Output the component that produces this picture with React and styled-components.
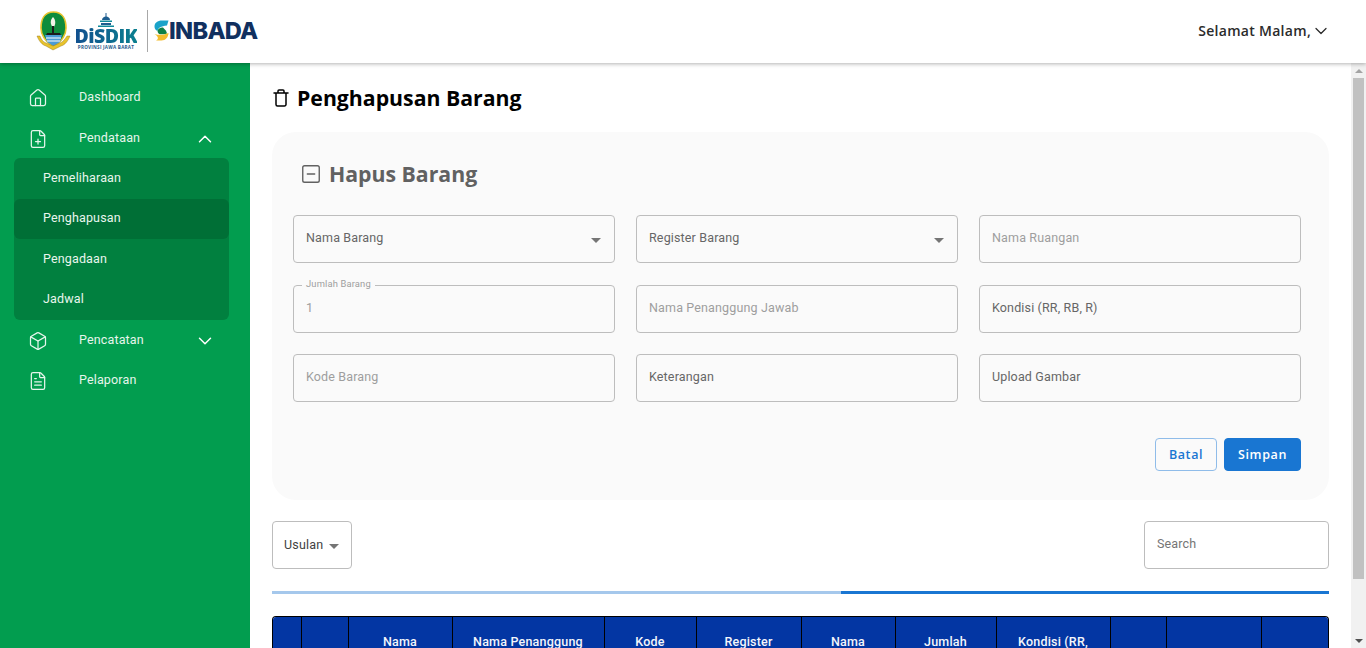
import React from "react";
import styled, { createGlobalStyle } from "styled-components";
import { House, FilePlus, Box, FileText, ChevronUp, ChevronDown, SquareMinus } from "lucide-react";

const GlobalStyle = createGlobalStyle`
  html, body {
    margin: 0;
    padding: 0;
    height: 100%;
    overflow: hidden;
    background: #fff;
  }
  * {
    box-sizing: border-box;
  }
`;

const Page = styled.div`
  height: 648px;
  display: flex;
  flex-direction: column;
  font-family: Roboto, sans-serif;
`;

const Header = styled.header`
  position: relative;
  z-index: 2;
  flex: 0 0 63px;
  display: flex;
  align-items: center;
  justify-content: space-between;
  padding: 0 35px 2px 36px;
  background: #fff;
  box-shadow: 0 1px 4px rgba(0, 0, 0, 0.3);
`;

const Logo = styled.div`
  display: flex;
  align-items: center;
  height: 61px;
`;

const DisdikBlock = styled.div`
  display: flex;
  flex-direction: column;
  align-items: center;
  width: 62px;
  margin-left: 4px;
  margin-top: 1px;
`;

const DisdikName = styled.div`
  font-family: "Open Sans", sans-serif;
  font-weight: 800;
  font-size: 19.5px;
  line-height: 17px;
  letter-spacing: -0.6px;
  background: linear-gradient(90deg, #12508f, #0b7f8f);
  -webkit-background-clip: text;
  background-clip: text;
  color: transparent;
`;

const DisdikSub = styled.div`
  font-family: "Open Sans", sans-serif;
  font-weight: 700;
  font-size: 4.6px;
  line-height: 6px;
  letter-spacing: 0.25px;
  white-space: nowrap;
  color: #24588c;
`;

const LogoDivider = styled.div`
  width: 1px;
  height: 42px;
  margin: 0 6px 0 10px;
  background: #a8a8a8;
`;

const SinbadaName = styled.div`
  font-family: Inter, sans-serif;
  font-weight: 800;
  font-size: 23.6px;
  letter-spacing: -0.7px;
  color: #11305f;
`;

const Greeting = styled.div`
  display: flex;
  align-items: center;
  font-family: "Open Sans", sans-serif;
  font-weight: 600;
  font-size: 14px;
  letter-spacing: 0.3px;
  color: #2b2b2b;
`;

const Body = styled.div`
  flex: 1;
  min-height: 0;
  display: flex;
`;

const Sidebar = styled.nav`
  flex: 0 0 250px;
  padding: 14px 21px 0 14px;
  background: #029d4f;
`;

const MenuItem = styled.div`
  display: flex;
  align-items: center;
  height: 40px;
  padding: 0 0 1px 14px;
  font-size: 12.5px;
  letter-spacing: 0.15px;
  color: #e6f5ec;

  &:first-child {
    height: 41px;
    padding-bottom: 2px;
  }

  svg {
    flex: none;
    margin-top: 2px;
  }
`;

const MenuLabel = styled.span`
  flex: 1;
  margin-left: 31px;
`;

const MenuArrow = styled.span`
  display: flex;
  margin-right: 13px;
  color: #fff;
`;

const SubMenu = styled.div`
  background: #01803f;
  border-radius: 6px;
`;

const SubItem = styled.div`
  display: flex;
  align-items: center;
  height: 40.5px;
  padding: 0 0 2px 29px;
  font-size: 12.5px;
  letter-spacing: 0.15px;
  color: #e9f6ee;
  border-radius: 6px;
  background: ${(p) => (p.$active ? "#006f36" : "transparent")};
`;

const Main = styled.main`
  flex: 1;
  min-width: 0;
  overflow: hidden;
  padding: 0 22px;
  background: #fff;
`;

const Scrollbar = styled.div`
  flex: 0 0 15px;
  display: flex;
  flex-direction: column;
  background: #f1f1f1;
`;

const ScrollArrow = styled.div`
  flex: 0 0 15px;
  display: flex;
  align-items: center;
  justify-content: center;
  margin-top: ${(p) => (p.$down ? "auto" : "0")};

  &::before {
    content: "";
    width: 0;
    height: 0;
    border-left: 4px solid transparent;
    border-right: 4px solid transparent;
    border-top: ${(p) => (p.$down ? "4px solid #505050" : "0")};
    border-bottom: ${(p) => (p.$down ? "0" : "4px solid #a3a3a3")};
  }
`;

const ScrollThumb = styled.div`
  flex: 0 0 501px;
  margin: 0 2px;
  background: #c1c1c1;
`;

const PageTitle = styled.h1`
  display: flex;
  align-items: center;
  gap: 7px;
  height: 69px;
  margin: 0;
  font-family: "Open Sans", sans-serif;
  font-weight: 700;
  font-size: 21.25px;
  color: #000;
`;

const Card = styled.section`
  height: 368px;
  padding: 0 28px 0 21px;
  background: #fafafa;
  border-radius: 24px;
`;

const CardTitle = styled.h2`
  display: flex;
  align-items: center;
  gap: 7px;
  height: 83px;
  margin: 0;
  padding-left: 7px;
  font-family: "Open Sans", sans-serif;
  font-weight: 700;
  font-size: 21.25px;
  color: #616161;
`;

const FieldGrid = styled.div`
  display: grid;
  grid-template-columns: repeat(3, 322px);
  grid-auto-rows: 48px;
  column-gap: 21px;
  row-gap: 21.5px;
`;

const Field = styled.div`
  position: relative;
  display: flex;
  align-items: center;
  justify-content: space-between;
  padding: 0 13px 3px 12px;
  border: 1px solid #bdbdbd;
  border-radius: 4px;
  font-size: 12.5px;
  letter-spacing: 0.15px;
  color: ${(p) => (p.$muted ? "#9e9e9e" : "#666")};
`;

const FloatLabel = styled.span`
  position: absolute;
  top: -8px;
  left: 8px;
  padding: 0 4px;
  background: #fafafa;
  font-size: 9.4px;
  line-height: 11px;
  color: #9e9e9e;
`;

const Caret = styled.span`
  flex: none;
  width: 0;
  height: 0;
  margin-top: 5px;
  border-left: 5px solid transparent;
  border-right: 5px solid transparent;
  border-top: 5px solid #757575;
`;

const CardActions = styled.div`
  display: flex;
  justify-content: flex-end;
  gap: 7px;
  margin-top: 36px;
`;

const Button = styled.button`
  height: 33px;
  padding: 0;
  width: ${(p) => (p.$primary ? "77px" : "62px")};
  border: 1px solid ${(p) => (p.$primary ? "#1976d2" : "#8fbce9")};
  border-radius: 4px;
  background: ${(p) => (p.$primary ? "#1976d2" : "transparent")};
  color: ${(p) => (p.$primary ? "#fff" : "#1976d2")};
  font-family: "Open Sans", sans-serif;
  font-weight: 600;
  font-size: 12.5px;
  letter-spacing: 0.6px;
`;

const Toolbar = styled.div`
  display: flex;
  justify-content: space-between;
  margin-top: 21px;
`;

const StatusSelect = styled.div`
  display: flex;
  align-items: center;
  gap: 6px;
  width: 80px;
  height: 48px;
  padding: 0 0 2px 11px;
  border: 1px solid #bdbdbd;
  border-radius: 4px;
  font-size: 12.5px;
  letter-spacing: 0.2px;
  color: #424242;
`;

const SearchBox = styled.div`
  display: flex;
  align-items: center;
  width: 185px;
  height: 48px;
  padding: 0 0 3px 12px;
  border: 1px solid #bdbdbd;
  border-radius: 4px;
  font-size: 12.5px;
  letter-spacing: 0.15px;
  color: #757575;
`;

const TabBar = styled.div`
  display: flex;
  height: 3px;
  margin-top: 22px;
`;

const Tab = styled.div`
  flex: ${(p) => (p.$active ? "0 0 488px" : "1")};
  background: ${(p) => (p.$active ? "#1976d2" : "#a5c8ec")};
`;

const TableWrap = styled.div`
  margin-top: 22px;
  border: 1px solid #000;
  border-bottom: 0;
  border-radius: 4px 4px 0 0;
  overflow: hidden;
`;

const Table = styled.table`
  width: 100%;
  table-layout: fixed;
  border-collapse: collapse;
`;

const HeadCell = styled.th`
  height: 94px;
  padding: 16px;
  vertical-align: top;
  border-left: 1px solid #000;
  background: #0336a3;
  color: #f4f6fb;
  font-family: Roboto, sans-serif;
  font-weight: 500;
  font-size: 12.5px;
  line-height: 18px;
  letter-spacing: 0.2px;
  text-align: center;

  &:first-child {
    border-left: 0;
  }
`;

const Emblem = () => (
  <svg width="35" height="40" viewBox="0 0 35 40">
    <path d="M17.5 1C8 1 5 9 5 17c0 8 5 14 12.500 19C25 31 30 25 30 17 30 9 27 1 17.500 1z" fill="#0f8c3c" stroke="#e8c32c" strokeWidth="1.600" />
    <path d="M17 6c-3 3-3 7 0 11 3-3 3-8 0-11z" fill="#f4f4e8" />
    <rect x="16" y="15" width="2" height="7" fill="#1c1c1c" />
    <path d="M11 22h13l1 2H10z" fill="#1c1c1c" />
    <path d="M9 24h17l-2 7-6.500 4-6.500-4z" fill="#4b9bd6" />
    <path d="M10 27h15M11 30h13" stroke="#fff" strokeWidth="1.200" />
    <path d="M1 25c2 5 5 9 9 10l7 4 8-4c4-1 7-5 9-10l-3 0c-2 3-4 6-7 7l-7 3-7-3c-3-1-5-4-6-7z" fill="#e8c32c" stroke="#8b6d12" strokeWidth="0.400" />
  </svg>
);

const Tower = () => (
  <svg width="16" height="14" viewBox="0 0 16 14">
    <path d="M8 0v4" stroke="#1d5d8f" strokeWidth="1" />
    <path d="M4 7c0-2 2-3.500 4-3.500S12 5 12 7z" fill="#1d5d8f" />
    <rect x="2" y="7.500" width="12" height="1.500" fill="#0f8a9a" />
    <path d="M3 10h10v2H3z" fill="#1d5d8f" />
    <rect x="0" y="12.500" width="16" height="1.500" fill="#0f8a9a" />
  </svg>
);

const SinbadaMark = () => (
  <svg width="15" height="21" viewBox="0 0 15 21">
    <path d="M14.500 .5H8C3.500 .5 .5 3 .5 6.500c0 2 1 3.500 3 4.500C4 8 7 6 13 5.500z" fill="#1aa3c9" />
    <path d="M3.500 11C4 8.500 7 7 9 7.500c2 2 3.500 3.500 4 6-3 1-6 1-8 .5-1-1-1.500-2-1.500-3z" fill="#0e7f46" />
    <path d="M.5 14c5 1.500 9 1 14-1 0 4-3 7.500-7 7.500H2c2.500-1 3-4 -1.500-6.500z" fill="#f4bd2f" />
  </svg>
);

const TrashIcon = () => (
  <svg width="18" height="20" viewBox="0 0 18 20" fill="none" stroke="#000" strokeWidth="1.500" strokeLinecap="round" strokeLinejoin="round">
    <path d="M2 5h14M6 5V3a1 1 0 0 1 1-1h4a1 1 0 0 1 1 1v2M4 5v11.500a1.500 1.500 0 0 0 1.500 1.500h7a1.500 1.500 0 0 0 1.500-1.500V5" />
  </svg>
);

const columns = [
  { width: 28, title: "" },
  { width: 47, title: "" },
  { width: 104, title: "Nama Barang" },
  { width: 152, title: "Nama Penanggung Jawab" },
  { width: 92, title: "Kode Barang" },
  { width: 105, title: "Register Barang" },
  { width: 94, title: "Nama Ruangan" },
  { width: 101, title: "Jumlah Barang" },
  { width: 114, title: "Kondisi (RR, RB, R)" },
  { width: 56, title: "" },
  { width: 95, title: "" },
  { width: 67, title: "" },
];

const App = () => {
  return (
    <Page>
      <GlobalStyle />
      <Header>
        <Logo>
          <Emblem />
          <DisdikBlock>
            <Tower />
            <DisdikName>DiSDIK</DisdikName>
            <DisdikSub>PROVINSI JAWA BARAT</DisdikSub>
          </DisdikBlock>
          <LogoDivider />
          <SinbadaMark />
          <SinbadaName>INBADA</SinbadaName>
        </Logo>
        <Greeting>
          Selamat Malam,
          <ChevronDown size={20} strokeWidth={1.5} />
        </Greeting>
      </Header>
      <Body>
        <Sidebar>
          <MenuItem>
            <House size={20} strokeWidth={1.5} />
            <MenuLabel>Dashboard</MenuLabel>
          </MenuItem>
          <MenuItem>
            <FilePlus size={20} strokeWidth={1.5} />
            <MenuLabel>Pendataan</MenuLabel>
            <MenuArrow>
              <ChevronUp size={22} strokeWidth={1.6} />
            </MenuArrow>
          </MenuItem>
          <SubMenu>
            <SubItem>Pemeliharaan</SubItem>
            <SubItem $active>Penghapusan</SubItem>
            <SubItem>Pengadaan</SubItem>
            <SubItem>Jadwal</SubItem>
          </SubMenu>
          <MenuItem>
            <Box size={20} strokeWidth={1.5} />
            <MenuLabel>Pencatatan</MenuLabel>
            <MenuArrow>
              <ChevronDown size={22} strokeWidth={1.6} />
            </MenuArrow>
          </MenuItem>
          <MenuItem>
            <FileText size={20} strokeWidth={1.5} />
            <MenuLabel>Pelaporan</MenuLabel>
          </MenuItem>
        </Sidebar>
        <Main>
          <PageTitle>
            <TrashIcon />
            Penghapusan Barang
          </PageTitle>
          <Card>
            <CardTitle>
              <SquareMinus size={22} strokeWidth={1.5} color="#616161" />
              Hapus Barang
            </CardTitle>
            <FieldGrid>
              <Field>
                Nama Barang
                <Caret />
              </Field>
              <Field>
                Register Barang
                <Caret />
              </Field>
              <Field $muted>Nama Ruangan</Field>
              <Field $muted>
                <FloatLabel>Jumlah Barang</FloatLabel>1
              </Field>
              <Field $muted>Nama Penanggung Jawab</Field>
              <Field>Kondisi (RR, RB, R)</Field>
              <Field $muted>Kode Barang</Field>
              <Field>Keterangan</Field>
              <Field>Upload Gambar</Field>
            </FieldGrid>
            <CardActions>
              <Button>Batal</Button>
              <Button $primary>Simpan</Button>
            </CardActions>
          </Card>
          <Toolbar>
            <StatusSelect>
              Usulan
              <Caret />
            </StatusSelect>
            <SearchBox>Search</SearchBox>
          </Toolbar>
          <TabBar>
            <Tab />
            <Tab $active />
          </TabBar>
          <TableWrap>
            <Table>
              <colgroup>
                {columns.map((col, i) => (
                  <col key={i} style={{ width: col.width }} />
                ))}
              </colgroup>
              <thead>
                <tr>
                  {columns.map((col, i) => (
                    <HeadCell key={i}>{col.title}</HeadCell>
                  ))}
                </tr>
              </thead>
            </Table>
          </TableWrap>
        </Main>
        <Scrollbar>
          <ScrollArrow />
          <ScrollThumb />
          <ScrollArrow $down />
        </Scrollbar>
      </Body>
    </Page>
  );
};

export default App;
